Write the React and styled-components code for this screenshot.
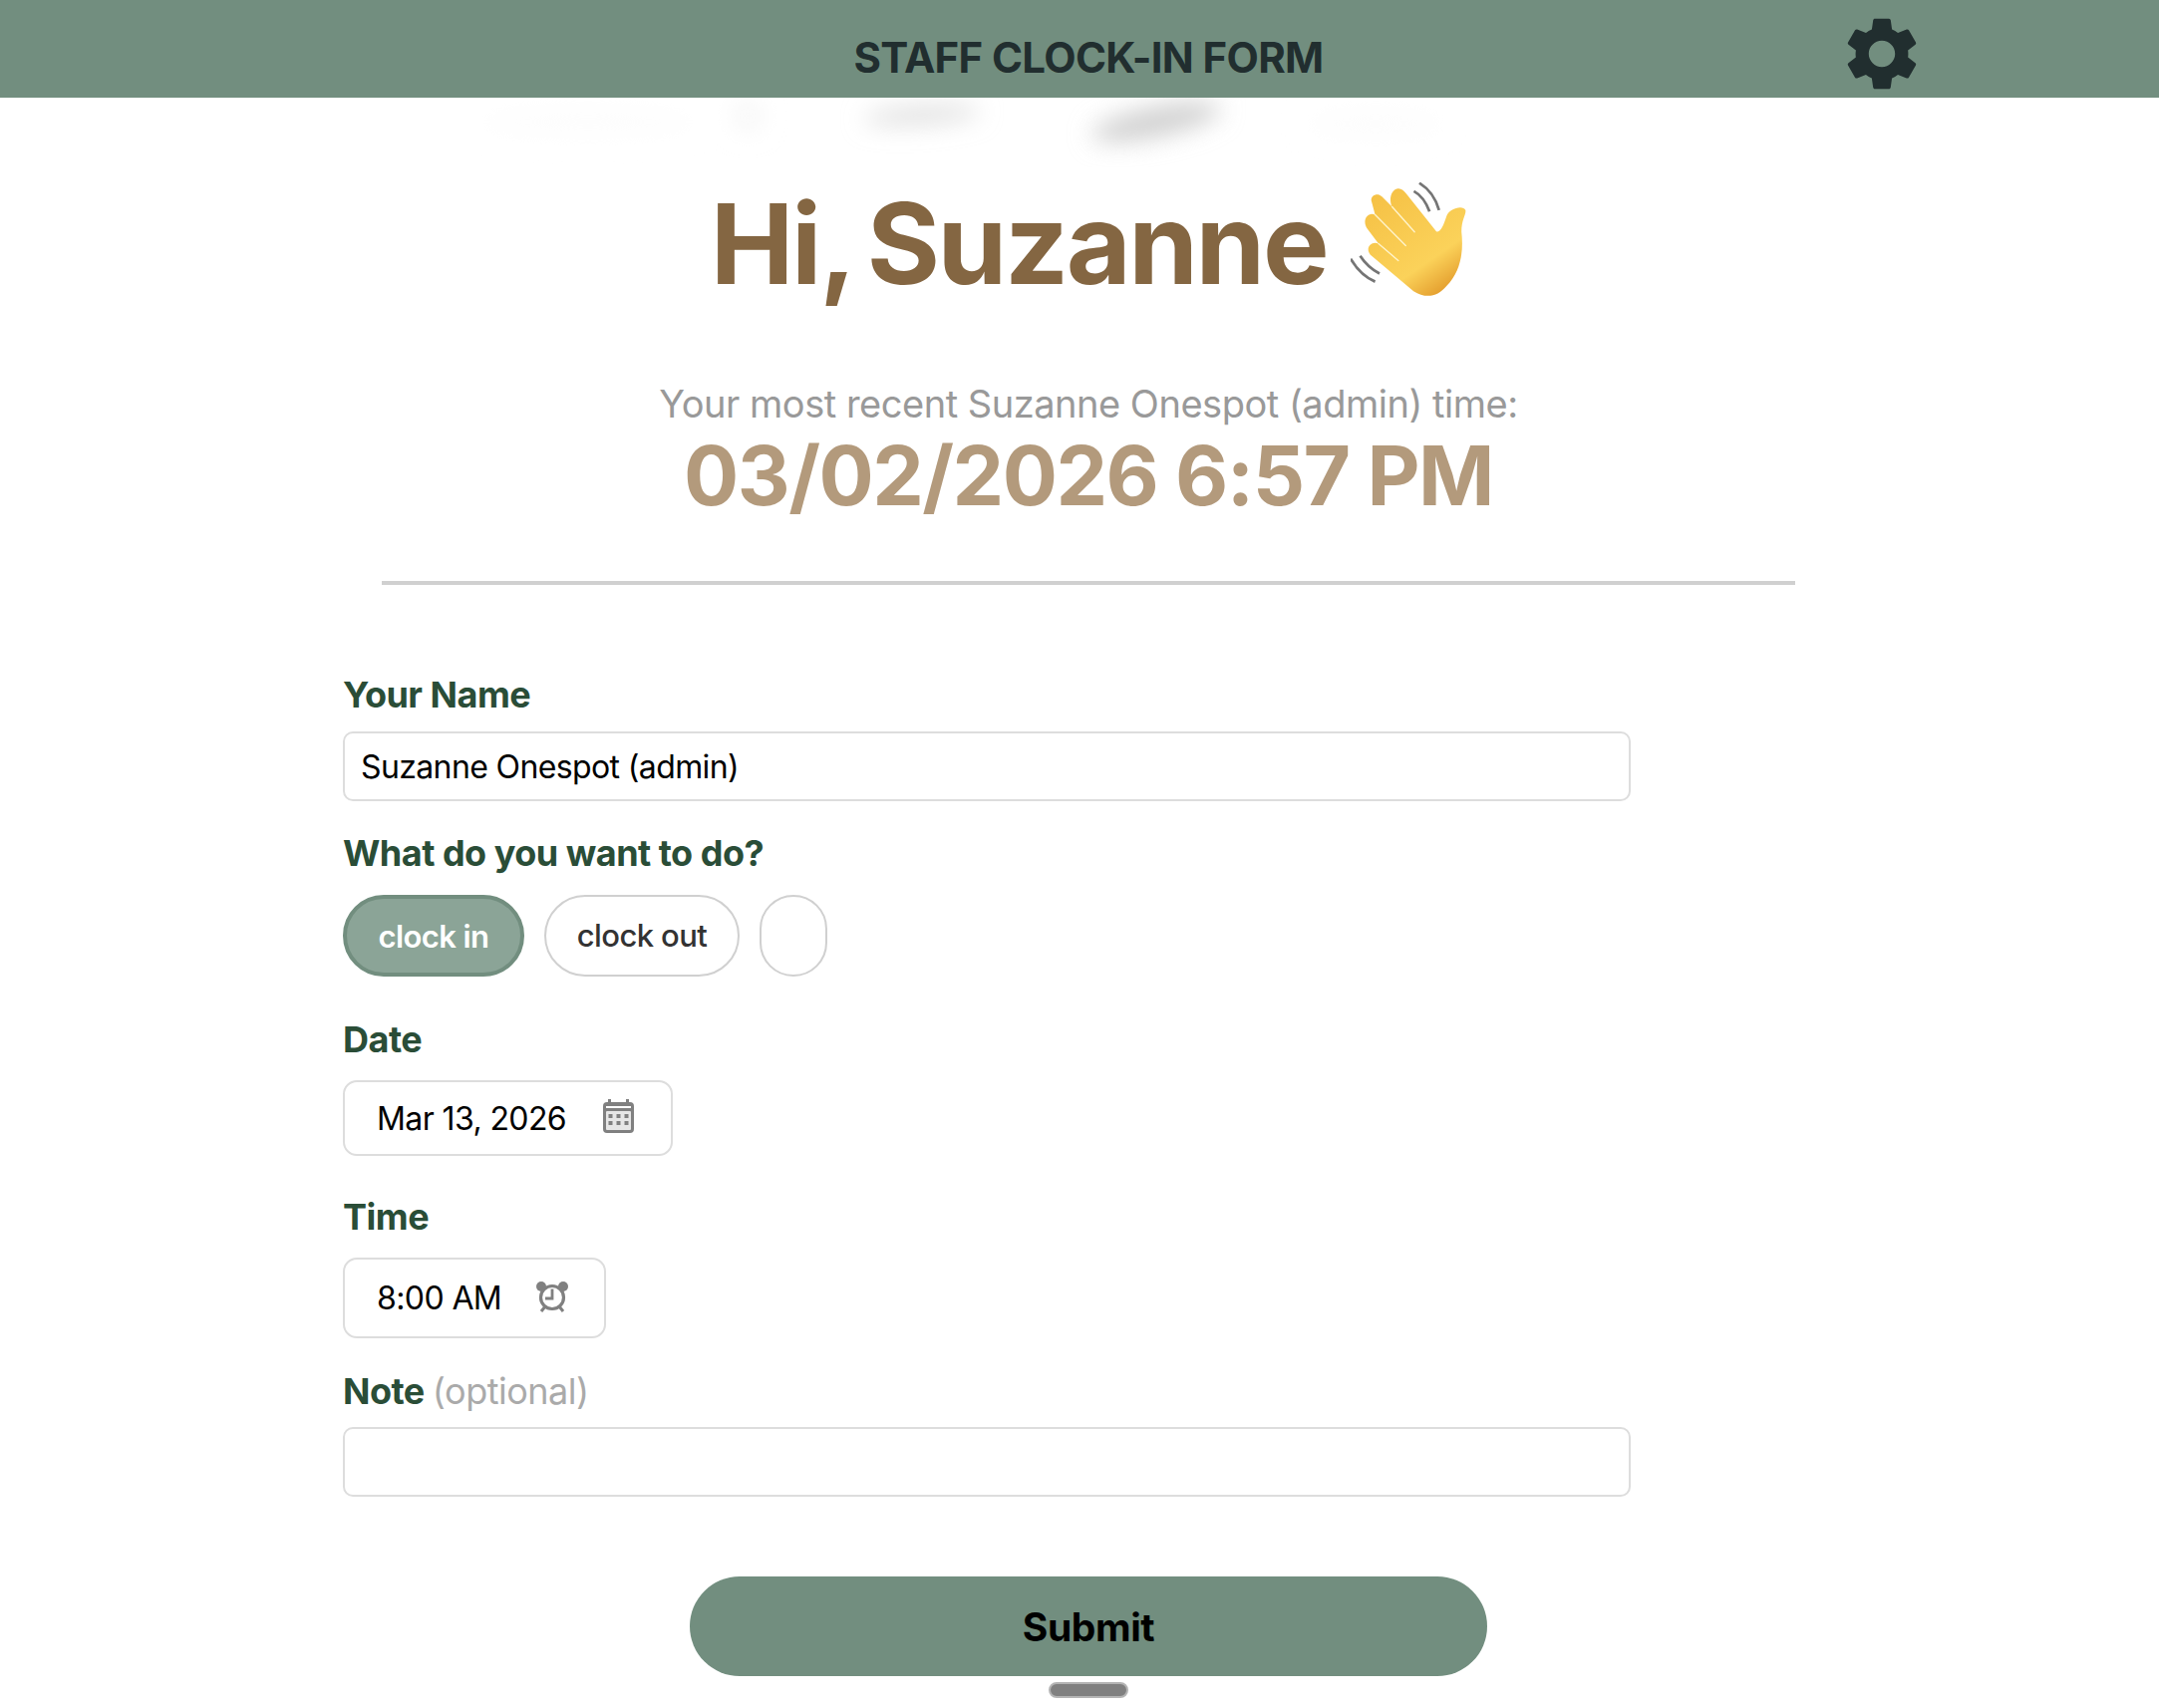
import React from "react";
import styled, { createGlobalStyle } from "styled-components";
import { MdSettings } from "react-icons/md";

const GlobalStyle = createGlobalStyle`
  html, body {
    margin: 0;
    padding: 0;
    background: #fff;
    font-family: Inter, "Liberation Sans", sans-serif;
  }
  * { box-sizing: border-box; }
`;

const Page = styled.div`
  width: 2166px;
  height: 1714px;
  overflow: hidden;
  position: relative;
`;

const Header = styled.header`
  height: 98px;
  padding-left: 18px;
  background: #728e7f;
  display: grid;
  grid-template-columns: 1fr auto 1fr;
  align-items: center;
  color: #212e2f;
`;

const HeaderTitle = styled.h1`
  grid-column: 2;
  margin: 0;
  padding-top: 18px;
  font-size: 42px;
  line-height: 80px;
  font-weight: 700;
  letter-spacing: -0.65px;
`;

const SettingsButton = styled.div`
  justify-self: end;
  margin: 10px 234px 0 0;
  display: flex;
  font-size: 88px;
`;

const Smudges = styled.svg`
  position: absolute;
  left: 480px;
  top: 98px;
`;

const Main = styled.main`
  padding-left: 18px;
  display: flex;
  flex-direction: column;
  align-items: center;
`;

const Greeting = styled.h2`
  margin: 86px 0 0;
  height: 120px;
  display: flex;
  align-items: center;
  gap: 24px;
  font-size: 112px;
  line-height: 120px;
  font-weight: 700;
  letter-spacing: -2.4px;
  word-spacing: -8px;
  color: #846642;
`;

const Recent = styled.div`
  margin-top: 76px;
  font-size: 38px;
  line-height: 50px;
  color: #999;
  letter-spacing: -0.48px;
`;

const RecentTime = styled.div`
  font-size: 82px;
  line-height: 96px;
  font-weight: 700;
  color: #b39a7c;
  letter-spacing: -1.55px;
`;

const Divider = styled.hr`
  width: 1418px;
  height: 4px;
  margin: 57px 0 0;
  border: 0;
  background: #d0d0d0;
`;

const Form = styled.form`
  align-self: flex-start;
  margin-left: 326px;
  width: 1292px;
  display: flex;
  flex-direction: column;
`;

const Label = styled.label`
  display: block;
  margin-top: ${(p) => p.$top}px;
  font-size: 36px;
  line-height: 44px;
  font-weight: 700;
  letter-spacing: -0.5px;
  color: #2a4d37;
`;

const Optional = styled.span`
  font-weight: 400;
  color: #aaa;
`;

const TextField = styled.div`
  height: 70px;
  margin-top: ${(p) => p.$top}px;
  padding: 0 16px;
  display: flex;
  align-items: center;
  border: 2px solid #ddd;
  border-radius: 10px;
  font-size: 32px;
  letter-spacing: -0.62px;
  color: #000;
`;

const PillRow = styled.div`
  margin-top: 20px;
  display: flex;
  gap: 20px;
`;

const Pill = styled.div`
  height: 82px;
  width: ${(p) => p.$width}px;
  padding-bottom: ${(p) => (p.$active ? 0 : 2)}px;
  display: flex;
  align-items: center;
  justify-content: center;
  border-radius: 41px;
  border: ${(p) => (p.$active ? "4px solid #728e7f" : "2px solid #d0d0d0")};
  background: ${(p) => (p.$active ? "#8ba497" : "#fff")};
  color: ${(p) => (p.$active ? "#fff" : "#333")};
  font-size: 31px;
  letter-spacing: -0.6px;
  font-weight: ${(p) => (p.$active ? 600 : 500)};
`;

const PickerField = styled.div`
  height: ${(p) => p.$height}px;
  width: ${(p) => p.$width}px;
  margin-top: ${(p) => p.$top}px;
  padding: 0 38px 0 32px;
  display: flex;
  align-items: center;
  justify-content: space-between;
  border: 2px solid #ddd;
  border-radius: 14px;
  font-size: 32px;
  letter-spacing: -0.6px;
  color: #000;
`;

const SubmitRow = styled.div`
  margin-top: 80px;
  display: flex;
  flex-direction: column;
  align-items: center;
  gap: 6px;
`;

const SubmitButton = styled.button`
  width: 800px;
  height: 100px;
  border: 0;
  border-radius: 50px;
  background: #728e7f;
  color: #000;
  font-family: inherit;
  font-size: 39px;
  letter-spacing: -0.4px;
  font-weight: 700;
`;

const Grabber = styled.div`
  width: 80px;
  height: 16px;
  border-radius: 8px;
  border: 2px solid #b4b4b4;
  background: #808080;
`;

function WaveEmoji() {
  return (
    <svg width="116" height="116" viewBox="110 40 340 340" style={{ marginTop: -6 }}>
      <defs>
        <linearGradient id="skin" x1="0.1" y1="0" x2="0.75" y2="1">
          <stop offset="0" stopColor="#f5c044" />
          <stop offset="0.72" stopColor="#fbd25a" />
          <stop offset="1" stopColor="#e39c2c" />
        </linearGradient>
      </defs>
      <g fill="none" stroke="#757575" strokeWidth="8">
        <path d="M296 66 Q326 82 342 126" />
        <path d="M312 42 Q355 68 370 122" />
        <path d="M138 256 Q160 290 195 308" />
        <path d="M110 265 Q140 315 182 332" />
      </g>
      <path
        fill="url(#skin)"
        d="M172 98 C165 80 188 68 202 82 L232 112 C222 92 228 64 246 59 C258 56 266 64 274 74 L362 184 C374 190 384 165 392 140 C398 118 440 105 448 122 C450 135 436 150 436 185 C442 240 436 300 392 345 C365 378 330 382 295 360 L170 255 C150 235 170 210 192 220 L160 178 C142 155 158 125 182 135 Z"
      />
      <g fill="none" stroke="#fff4cc" strokeWidth="4" strokeLinecap="round">
        <path d="M232 112 L298 186" />
        <path d="M182 135 L272 226" />
        <path d="M192 220 L250 270" />
      </g>
    </svg>
  );
}

function CalendarIcon() {
  return (
    <svg width="31" height="34" viewBox="0 0 31 34" style={{ marginTop: -5, marginRight: -1 }}>
      <path fill="#808080" d="M5 0h3v3h15V0h3v3h1a4 4 0 0 1 4 4v23a4 4 0 0 1-4 4H4a4 4 0 0 1-4-4V7a4 4 0 0 1 4-4h1z" />
      <rect x="3" y="7" width="25" height="2" fill="#fff" />
      <rect x="3" y="12" width="25" height="19" rx="1" fill="#e6e6e6" />
      <g fill="#808080">
        <rect x="5.5" y="15" width="4" height="4" />
        <rect x="13.5" y="15" width="4" height="4" />
        <rect x="21.5" y="15" width="4" height="4" />
        <rect x="5.5" y="22" width="4" height="4" />
        <rect x="13.5" y="22" width="4" height="4" />
        <rect x="21.5" y="22" width="4" height="4" />
      </g>
    </svg>
  );
}

function AlarmIcon() {
  return (
    <svg width="34" height="31" viewBox="0 0 34 31" style={{ marginRight: -3, marginTop: -2 }}>
      <circle cx="6" cy="5" r="5" fill="#808080" />
      <circle cx="28" cy="5" r="5" fill="#808080" />
      <path stroke="#808080" strokeWidth="3" d="M10 25l-4 5M24 25l4 5" />
      <circle cx="17" cy="16" r="11.5" fill="#fff" stroke="#808080" strokeWidth="3.2" />
      <path fill="none" stroke="#808080" strokeWidth="2.8" d="M17 7.5v9.5h-7" />
    </svg>
  );
}

export default function App() {
  return (
    <Page>
      <GlobalStyle />
      <Header>
        <HeaderTitle>STAFF CLOCK-IN FORM</HeaderTitle>
        <SettingsButton>
          <MdSettings />
        </SettingsButton>
      </Header>
      <Smudges width="1000" height="70" viewBox="0 0 1000 70">
        <defs>
          <filter id="soft" x="-50%" y="-200%" width="200%" height="500%">
            <feGaussianBlur stdDeviation="12" />
          </filter>
        </defs>
        <g filter="url(#soft)">
          <ellipse cx="445" cy="17" rx="58" ry="9" fill="#dedede" transform="rotate(-4 445 17)" />
          <ellipse cx="680" cy="24" rx="66" ry="15" fill="#d0d0d0" transform="rotate(-12 680 24)" />
          <ellipse cx="110" cy="24" rx="110" ry="14" fill="#fdfdfd" />
          <ellipse cx="270" cy="18" rx="14" ry="16" fill="#f6f6f6" />
          <ellipse cx="900" cy="26" rx="70" ry="14" fill="#fdfdfd" />
        </g>
      </Smudges>
      <Main>
        <Greeting>
          Hi, Suzanne
          <WaveEmoji />
        </Greeting>
        <Recent>Your most recent Suzanne Onespot (admin) time:</Recent>
        <RecentTime>03/02/2026 6:57 PM</RecentTime>
        <Divider />
        <Form>
          <Label $top={88}>Your Name</Label>
          <TextField $top={15}>Suzanne Onespot (admin)</TextField>
          <Label $top={30}>What do you want to do?</Label>
          <PillRow>
            <Pill $active $width={182}>clock in</Pill>
            <Pill $width={196}>clock out</Pill>
            <Pill $width={68} />
          </PillRow>
          <Label $top={41}>Date</Label>
          <PickerField $top={19} $width={331} $height={76}>
            Mar 13, 2026
            <CalendarIcon />
          </PickerField>
          <Label $top={39}>Time</Label>
          <PickerField $top={19} $width={264} $height={81}>
            8:00 AM
            <AlarmIcon />
          </PickerField>
          <Label $top={31}>
            Note <Optional>(optional)</Optional>
          </Label>
          <TextField $top={14} />
        </Form>
        <SubmitRow>
          <SubmitButton type="button">Submit</SubmitButton>
          <Grabber />
        </SubmitRow>
      </Main>
    </Page>
  );
}
